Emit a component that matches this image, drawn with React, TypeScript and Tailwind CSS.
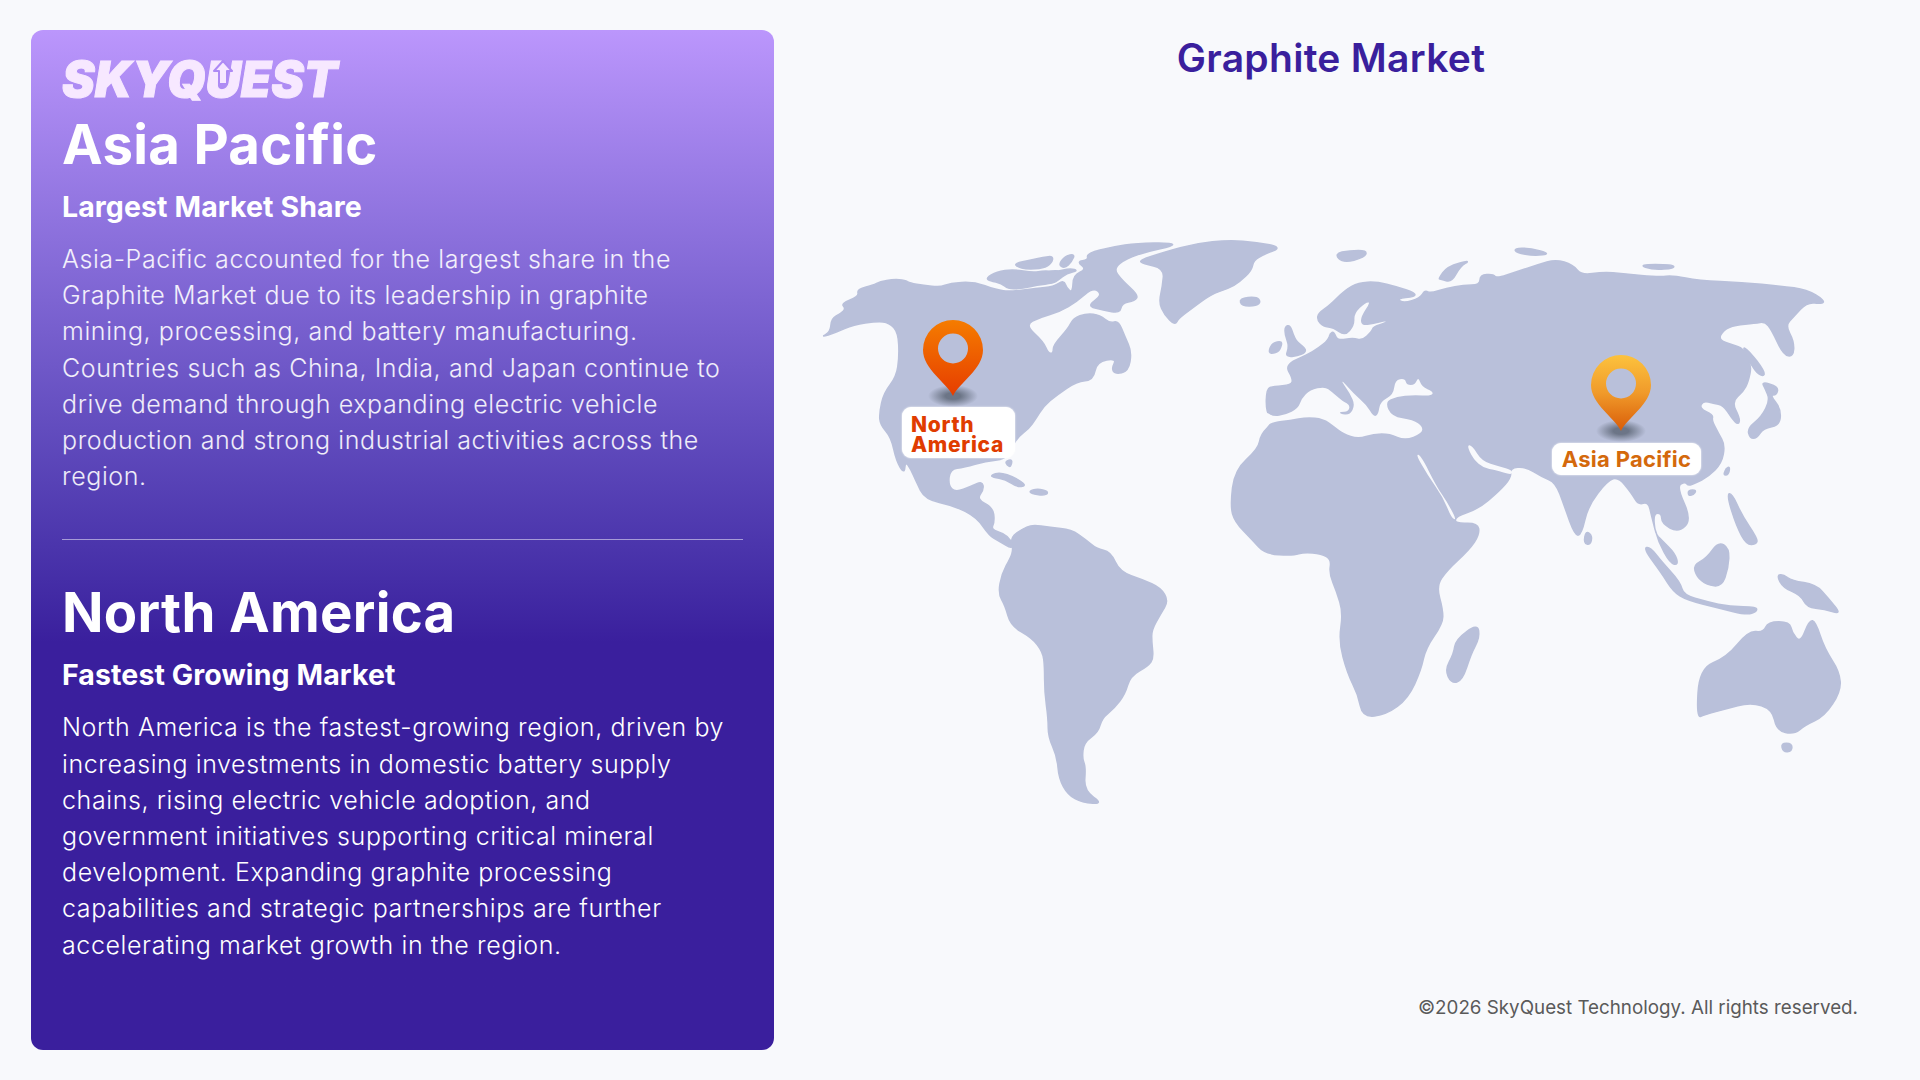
// Graphite market regional slide
const BG = "#f8f9fc";
const LAND = "#b9c0da";

type Frame = [number, number, number, number];
// Each trace was taken from a crop of the map: origin x, origin y, scale x, scale y
const Z2: Frame = [800, 200, 0.3571, 0.4018];
const Z3: Frame = [1200, 220, 0.4336, 0.3571];
const CA: Frame = [880, 230, 1 / 3, 1 / 3];
const CB: Frame = [1230, 270, 1 / 3, 1 / 3];
const CC: Frame = [1620, 320, 1 / 3, 1 / 3];

function pts(frame: Frame, outline: string) {
  return outline
    .trim()
    .split(/\s+/)
    .map((p) => {
      const [x, y] = p.split(",").map(Number);
      return [frame[0] + x * frame[2], frame[1] + y * frame[3]];
    });
}

// Rounds a traced outline: each point becomes a control point between midpoints
function smooth(list: number[][]) {
  const mid = (a: number[], b: number[]) => `${((a[0] + b[0]) / 2).toFixed(1)} ${((a[1] + b[1]) / 2).toFixed(1)}`;
  let d = `M${mid(list[list.length - 1], list[0])}`;
  list.forEach((p, i) => {
    d += ` Q${p[0].toFixed(1)} ${p[1].toFixed(1)} ${mid(p, list[(i + 1) % list.length])}`;
  });
  return d + "Z";
}

const land: number[][][] = [
  // North America with the Canadian north
  [
    ...pts(Z2, "58,342 85,328 88,295 115,282 128,270 115,258 165,240 160,222 205,212"),
    ...pts(CA, "0,155 40,148 75,150 90,160 130,165 180,172 210,160 280,155 350,180 390,185 470,175 520,170 552,150 560,175 578,188 580,135 620,118 590,95 625,90 620,70 700,50 770,40 875,38 880,48 800,65 740,85 700,115 725,150 775,195 765,212 725,220 720,250 670,240 620,228 668,195 640,172 590,215 540,245 480,262 435,285 490,335 505,370 520,370 520,345 565,295 580,265 620,250 660,255 690,280 715,272 735,320 755,365 745,425 705,432 695,415 710,385 650,395 640,450 590,455 530,495 490,530"),
    ...pts(Z2, "660,545 640,570 610,590 590,620 575,645 520,650 460,665 420,670 415,710 435,728 480,712 510,700 515,720 495,745 540,765 545,800 535,820 570,830 590,845 597,870 555,848 530,835 495,790 430,760 350,745 325,700 310,670 295,650 292,682 270,650 255,590 225,560 222,530 235,480 270,440 278,390 275,330 250,305 215,302 150,310 100,330"),
  ],
  pts(Z2, "590,840 620,820 650,808 700,815 760,820 800,845 830,868 870,875 895,925 960,945 1010,965 1032,998 1010,1030 985,1070 985,1100 990,1140 975,1160 925,1185 910,1230 880,1265 845,1290 835,1325 795,1350 790,1390 800,1410 795,1470 850,1503 790,1500 750,1480 725,1440 720,1385 695,1335 695,1290 685,1225 685,1160 680,1125 650,1090 590,1060 575,1010 555,980 565,930 590,890 597,870"),
  pts(Z2, "950,150 1020,130 1110,108 1200,100 1280,105 1350,118 1300,135 1270,150 1265,175 1230,205 1200,220 1150,235 1090,275 1060,295 1050,312 1020,285 1005,255 1015,215 1020,170 960,158"),
  pts(CA, "318,145 350,125 400,118 460,128 490,122 530,125 570,115 595,122 560,130 535,150 520,160 470,165 430,175 385,178 365,160 330,152"),
  pts(CA, "405,100 450,90 490,82 520,78 515,100 490,115 440,118 410,110"),
  pts(CA, "535,105 555,78 585,72 575,95 555,115"),
  pts(CA, "495,128 530,120 545,130 510,140"),
  pts(Z2, "535,685 560,678 600,690 635,710 610,715 575,695 540,690"),
  pts(Z2, "640,725 665,718 695,725 690,735 655,733"),
  pts(Z2, "575,650 595,645 590,665 580,660"),
  // Eurasia and Africa as one shape, seas are painted over it
  [
    ...pts(CB, "108,425 110,355 130,350 185,345 188,325 165,285 230,255 265,235 295,210 300,190 312,185 322,212 370,203 395,212 425,185 430,170 470,158 470,150 430,160 395,165 395,140 425,95 405,95 370,130 372,165 345,198 310,172 280,170 262,150 265,130 300,105 345,60 385,38 440,35 500,50 555,68 555,80 500,85 520,100 570,85 585,60 600,70 650,55 700,45 750,45 750,15 790,12 800,25 860,5"),
    ...pts(Z3, "780,125 820,110 860,125 880,155 930,145 975,150 1060,160 1090,155 1150,170 1250,175 1340,185 1400,195 1440,225 1435,235 1400,230 1370,270 1350,295 1370,340"),
    ...pts(CC, "520,110 490,105 455,30 435,5 405,10 345,15 310,30 295,60 340,75 370,85 395,135 385,185 370,215 335,245 360,295 355,315 335,295 310,255 280,250 250,242 238,265 280,285 275,300 295,340 315,375 305,430 265,470 225,490 205,497 195,485 170,500 215,600 175,638 125,610 125,580 100,580 105,640 125,660 165,700 175,735 150,730 115,665 95,590 85,545 55,555 35,520"),
    ...pts(Z3, "965,720 940,730 895,800 880,880 865,885 840,800 820,735 790,720 750,690 715,695 718,720 690,760 640,810 590,830 588,850 640,848 645,880 620,925 570,980 545,1025 560,1090 560,1130 520,1200 510,1260 480,1340 430,1385 375,1393 365,1330 340,1270 320,1180 330,1100 315,1040 298,990 303,950 280,935 240,930 215,940 150,935 120,895 80,845 70,800 80,700 135,640 140,600 170,565"),
  ],
  pts(CB, "165,170 180,165 190,195 200,215 232,240 215,255 165,262 178,230 165,195"),
  pts(CB, "115,250 125,220 158,212 150,240 135,250"),
  pts(CB, "28,85 80,80 92,95 80,108 35,108"),
  pts(Z3, "310,95 345,85 385,85 380,105 330,120"),
  pts(Z3, "550,165 570,130 625,112 600,130 580,175 555,165"),
  pts(Z3, "725,80 760,78 810,95 770,100 730,92"),
  pts(Z3, "1010,125 1090,125 1095,135 1045,140"),
  pts(CC, "365,80 385,90 435,155 430,170 405,155"),
  pts(CC, "425,185 475,200 470,225 450,225 482,265 480,315 430,325 410,355 390,355 382,325 425,290 450,240 435,205"),
  pts(CC, "318,445 330,440 325,465 310,465"),
  pts(CC, "205,510 230,510 220,525 205,527"),
  pts(CC, "320,525 335,518 365,585 412,655 410,672 380,675 350,620"),
  pts(Z3, "890,870 905,885 900,910 885,905"),
  pts(CC, "220,735 260,715 295,665 328,685 325,745 305,800 260,795 230,770"),
  pts(CC, "70,685 90,680 125,725 180,785 190,825 260,845 330,860 410,860 410,875 380,885 300,865 200,840 160,815 125,760"),
  pts(Z3, "1330,995 1345,992 1365,1010 1420,1020 1450,1060 1480,1105 1440,1090 1400,1085 1385,1050 1345,1030"),
  pts(Z3, "640,1130 645,1170 625,1215 605,1290 580,1298 565,1260 585,1215 590,1175"),
  pts(Z3, "1145,1395 1152,1255 1215,1225 1265,1150 1300,1155 1310,1125 1360,1125 1365,1155 1385,1185 1405,1120 1420,1125 1440,1200 1475,1265 1478,1320 1440,1390 1395,1415 1370,1440 1330,1430 1320,1370 1270,1350 1210,1370 1165,1385"),
  pts(Z3, "1340,1465 1365,1465 1365,1488 1345,1490"),
];

const seas: number[][][] = [
  // Mediterranean and Black Sea
  pts(CB, "95,440 108,425 130,440 165,435 205,415 215,385 240,360 285,350 305,365 340,395 360,405 355,425 330,425 330,432 360,435 375,405 360,370 335,335 340,335 370,370 410,405 430,440 445,435 450,395 490,375 495,330 525,325 530,345 555,345 565,320 575,350 610,365 605,378 550,375 500,380 465,395 485,440 550,450 578,470 575,490 525,510 480,490 430,490 385,505 340,490 315,470 280,445 230,440 180,450 130,455 105,470"),
  // Red Sea
  pts(Z3, "497,655 510,660 545,745 570,790 592,840 580,835 560,775 525,715"),
  // Persian Gulf
  pts(Z3, "615,630 628,632 650,675 690,690 720,700 720,715 680,700 655,695 630,670"),
];

function WorldMap() {
  return (
    <svg viewBox="800 200 1088 660" className="block w-[1088px] h-[660px]">
      {land.map((o, i) => (
        <path key={i} d={smooth(o)} fill={LAND} stroke={LAND} strokeWidth="1.5" strokeLinejoin="round" />
      ))}
      {seas.map((o, i) => (
        <path key={i} d={smooth(o)} fill={BG} />
      ))}
    </svg>
  );
}

function Pin({ id, stops }: { id: string; stops: string[] }) {
  return (
    <svg viewBox="0 0 62 92" className="block w-[62px] h-[92px]">
      <defs>
        <linearGradient id={id} x1="0" y1="0" x2="0" y2="1">
          {stops.map((c, i) => (
            <stop key={c} offset={i / (stops.length - 1)} stopColor={c} />
          ))}
        </linearGradient>
        <radialGradient id={`${id}-shadow`}>
          <stop offset="0.3" stopColor="#4b5563" stopOpacity="0.7" />
          <stop offset="1" stopColor="#4b5563" stopOpacity="0" />
        </radialGradient>
      </defs>
      <ellipse cx="31" cy="77" rx="25" ry="11" fill={`url(#${id}-shadow)`} />
      <path
        fillRule="evenodd"
        fill={`url(#${id})`}
        d="M31 77C25 64 1 50 1 31A30 30 0 1 1 61 31C61 50 37 64 31 77ZM31 14.500A15 15 0 1 0 31.010 44.500A15 15 0 1 0 31 14.500Z"
      />
    </svg>
  );
}

function RegionCopy({ title, sub, lines, muted }: { title: string; sub: string; lines: string[]; muted?: boolean }) {
  return (
    <>
      <h2 className="text-[54.5px] leading-[60px] font-bold text-white tracking-[0.3px]">{title}</h2>
      <h3 className="mt-[13px] text-[28.5px] leading-[40px] font-bold text-white tracking-[0.1px]">{sub}</h3>
      <p className={`mt-[14px] text-[25px] leading-[36.2px] font-light whitespace-nowrap tracking-[0.6px] ${muted ? "text-white/90" : "text-white"}`}>
        {lines.map((l) => (
          <span key={l} className="block">
            {l}
          </span>
        ))}
      </p>
    </>
  );
}

export default function App() {
  return (
    <div className="w-[1920px] h-[1080px] bg-[#f8f9fc] flex pt-[30px] pl-[31px] pr-[32px] pb-[30px] font-['Inter',sans-serif] overflow-hidden">
      {/* Left panel */}
      <div className="w-[743px] h-[1020px] rounded-[12px] px-[31px] pt-[30px] bg-gradient-to-b from-[#bb96fc] to-[#3a1f9d] to-60%">
        <div className="relative h-[40px] w-fit text-[49px] leading-[40px] font-black italic text-[#f7e8ff] [-webkit-text-stroke:1px_#f7e8ff]">
          SKYQUEST
          <svg viewBox="0 0 22 24" className="absolute left-[150px] top-[0px] w-[22px] h-[24px]">
            <path d="M11 1L20 11H15V24H7V11H2Z" fill="#f7e8ff" stroke="#ae8af5" strokeWidth="2" strokeLinejoin="round" />
          </svg>
        </div>
        <div className="mt-[14px]">
          <RegionCopy
            muted
            title="Asia Pacific"
            sub="Largest Market Share"
            lines={[
              "Asia-Pacific accounted for the largest share in the",
              "Graphite Market due to its leadership in graphite",
              "mining, processing, and battery manufacturing.",
              "Countries such as China, India, and Japan continue to",
              "drive demand through expanding electric vehicle",
              "production and strong industrial activities across the",
              "region.",
            ]}
          />
        </div>
        <div className="mt-[45px] h-px bg-white/50" />
        <div className="mt-[42px]">
          <RegionCopy
            title="North America"
            sub="Fastest Growing Market"
            lines={[
              "North America is the fastest-growing region, driven by",
              "increasing investments in domestic battery supply",
              "chains, rising electric vehicle adoption, and",
              "government initiatives supporting critical mineral",
              "development. Expanding graphite processing",
              "capabilities and strategic partnerships are further",
              "accelerating market growth in the region.",
            ]}
          />
        </div>
      </div>

      {/* Right side */}
      <div className="flex-1 flex flex-col">
        <h1 className="text-center text-[39px] leading-[56px] font-semibold text-[#3a1f9d] tracking-[0.3px]">Graphite Market</h1>
        <div className="relative mt-[114px] ml-[26px] w-[1088px] h-[660px]">
          <WorldMap />
          <div className="absolute left-[122px] top-[119px]">
            <Pin id="na-pin" stops={["#f57c00", "#e63d00"]} />
          </div>
          <div className="absolute left-[102px] top-[207px] w-[113px] h-[51px] pl-[9px] pt-[8px] bg-white rounded-[9px] shadow-[0_0_2px_#ffffff] text-[21px] leading-[20px] font-extrabold tracking-[0.7px] text-[#e03c00]">
            North
            <br />
            America
          </div>
          <div className="absolute left-[790px] top-[154px]">
            <Pin id="ap-pin" stops={["#fcc23d", "#f09a2a", "#d95c08"]} />
          </div>
          <div className="absolute left-[752px] top-[243px] w-[149px] h-[32px] bg-white rounded-[9px] shadow-[0_0_2px_#ffffff] flex items-center justify-center text-[22px] font-bold tracking-[0.3px] text-[#d4690c] whitespace-nowrap">
            Asia Pacific
          </div>
        </div>
        <div className="mt-[133px] pr-[30px] text-right text-[18.8px] leading-[30px] text-[#5a5a5a]">
          ©2026 SkyQuest Technology. All rights reserved.
        </div>
      </div>
    </div>
  );
}
